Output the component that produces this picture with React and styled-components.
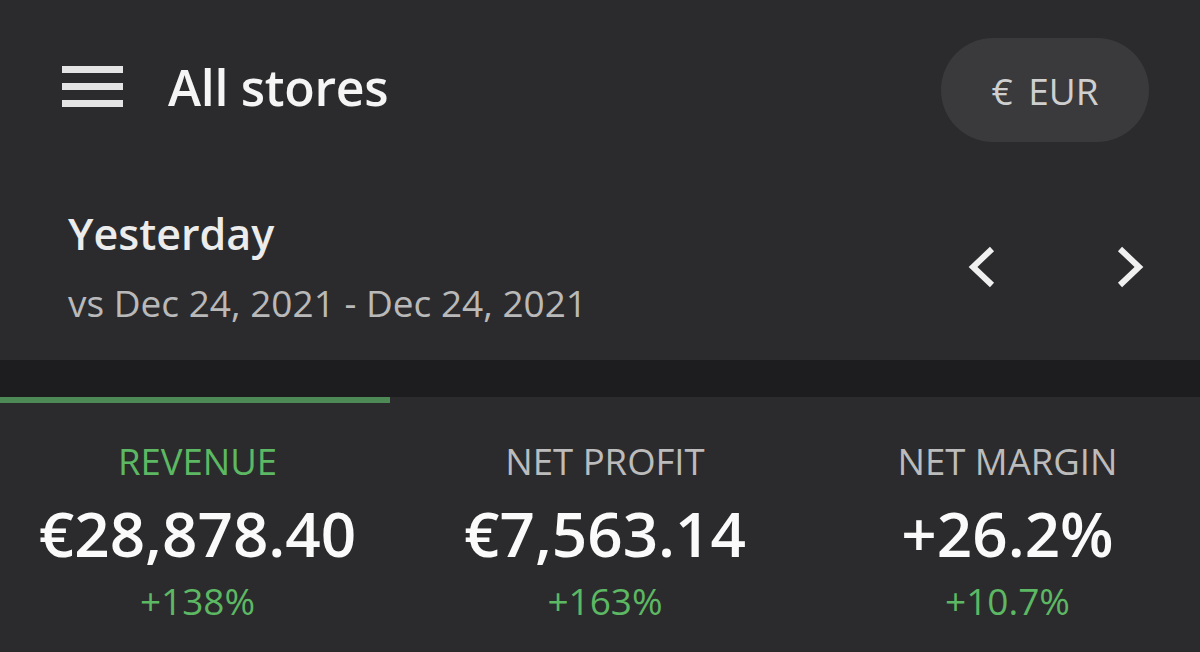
import React from 'react'
import styled, { createGlobalStyle } from 'styled-components'

const GlobalStyle = createGlobalStyle`
  html, body {
    margin: 0;
    padding: 0;
    background: #2b2b2d;
  }
  body {
    font-family: 'Open Sans', 'Noto Sans', sans-serif;
  }
`

const Page = styled.div`
  width: 1200px;
  height: 652px;
  background: #2b2b2d;
  overflow: hidden;
`

const Header = styled.div`
  display: flex;
  align-items: center;
  justify-content: space-between;
  height: 180px;
  padding: 0 51px 0 62px;
  box-sizing: border-box;
`

const Left = styled.div`
  display: flex;
  align-items: center;
  gap: 45px;
  margin-top: -7px;
`

const Burger = styled.div`
  display: flex;
  flex-direction: column;
  gap: 10px;
  width: 61px;

  span {
    height: 7px;
    background: #e4e4e4;
  }
`

const Title = styled.h1`
  margin: 0;
  font-size: 50px;
  line-height: 68px;
  font-weight: 600;
  color: #f5f5f5;
  letter-spacing: -0.3px;
`

const CurrencyPill = styled.button`
  width: 208px;
  height: 104px;
  border: 0;
  border-radius: 52px;
  background: #3a3a3c;
  color: #cfcfcf;
  font-family: inherit;
  font-size: 37px;
  word-spacing: 6px;
`

const Period = styled.div`
  display: flex;
  align-items: flex-start;
  justify-content: space-between;
  height: 180px;
  padding: 25px 54px 0 68px;
  box-sizing: border-box;
`

const PeriodText = styled.div`
  display: flex;
  flex-direction: column;
  gap: 15px;
`

const PeriodTitle = styled.div`
  font-size: 43px;
  line-height: 58px;
  font-weight: 600;
  color: #ececec;
`

const PeriodSub = styled.div`
  font-size: 37px;
  line-height: 50px;
  color: #b9b9b9;
`

const Arrows = styled.div`
  display: flex;
  gap: 120px;
  margin-top: 39px;
`

const Arrow = styled.svg`
  width: 30px;
  height: 46px;
`

const Strip = styled.div`
  height: 37px;
  background: #1d1d1f;
`

const TabBar = styled.div`
  height: 6px;
  display: flex;
`

const TabLine = styled.div`
  width: 390px;
  background: ${p => (p.$active ? '#4d8a55' : 'transparent')};
`

const Metrics = styled.div`
  display: grid;
  grid-template-columns: 395px 420px 385px;
  padding-top: 34px;
`

const Metric = styled.div`
  display: flex;
  flex-direction: column;
  align-items: center;
`

const Label = styled.div`
  font-size: 36.5px;
  line-height: 48px;
  color: ${p => (p.$active ? '#5cb863' : '#bcbcbc')};
`

const Value = styled.div`
  margin-top: 8px;
  font-size: 62px;
  line-height: 80px;
  font-weight: 600;
  color: #fafafa;
`

const Change = styled.div`
  margin-top: 4px;
  font-size: 37px;
  line-height: 48px;
  color: #5cb863;
`

const metrics = [
  { label: 'REVENUE', value: '€28,878.40', change: '+138%', active: true },
  { label: 'NET PROFIT', value: '€7,563.14', change: '+163%' },
  { label: 'NET MARGIN', value: '+26.2%', change: '+10.7%' }
]

const App = () => (
  <Page>
    <GlobalStyle />
    <Header>
      <Left>
        <Burger>
          <span />
          <span />
          <span />
        </Burger>
        <Title>All stores</Title>
      </Left>
      <CurrencyPill>€ EUR</CurrencyPill>
    </Header>
    <Period>
      <PeriodText>
        <PeriodTitle>Yesterday</PeriodTitle>
        <PeriodSub>vs Dec 24, 2021 - Dec 24, 2021</PeriodSub>
      </PeriodText>
      <Arrows>
        <Arrow viewBox="0 0 30 46">
          <path d="M26 5 L7 23 L26 41" fill="none" stroke="#f0f0f0" strokeWidth="6" />
        </Arrow>
        <Arrow viewBox="0 0 30 46">
          <path d="M4 5 L23 23 L4 41" fill="none" stroke="#f0f0f0" strokeWidth="6" />
        </Arrow>
      </Arrows>
    </Period>
    <Strip />
    <TabBar>
      <TabLine $active />
    </TabBar>
    <Metrics>
      {metrics.map(m => (
        <Metric key={m.label}>
          <Label $active={m.active}>{m.label}</Label>
          <Value>{m.value}</Value>
          <Change>{m.change}</Change>
        </Metric>
      ))}
    </Metrics>
  </Page>
)

export default App
